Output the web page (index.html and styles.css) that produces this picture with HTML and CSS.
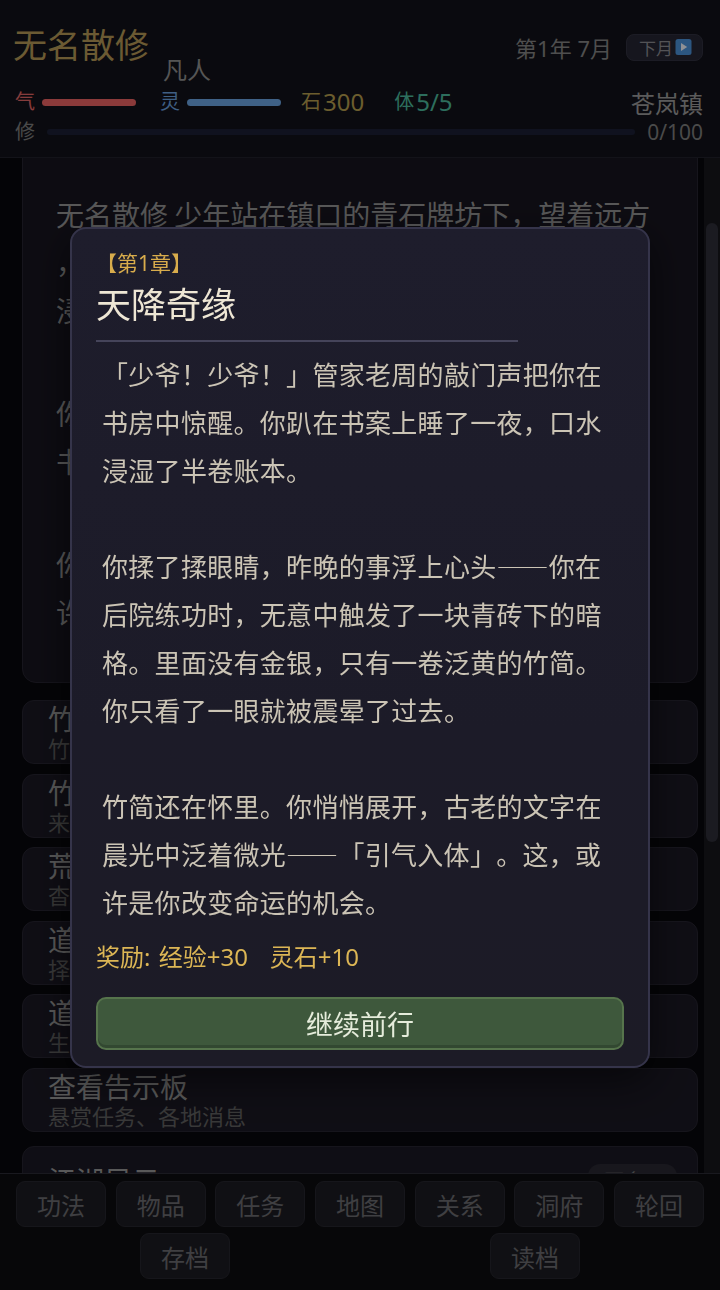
FILE: index.html
```html
<!DOCTYPE html>
<html lang="zh-CN">
<head>
<meta charset="utf-8">
<title>无名散修</title>
<link rel="stylesheet" href="styles.css">
</head>
<body>
<div class="app">
  <header class="status">
    <div class="status-top">
      <div class="ident">
        <div class="name">无名散修</div>
        <div class="realm">凡人</div>
      </div>
      <div class="time">
        <span class="date">第1年 7月</span>
        <button class="next-month">下月<span class="play"><svg viewBox="0 0 16 16" width="17" height="16"><rect width="16" height="16" rx="2.5" fill="#4a8fd6"/><path d="M5.5 4l6.2 4-6.2 4z" fill="#eef2f8"/></svg></span></button>
      </div>
    </div>
    <div class="stats">
      <span class="stat qi"><span class="lbl">气</span><span class="bar"><span class="fill" style="width:100%"></span></span></span>
      <span class="stat ling"><span class="lbl">灵</span><span class="bar"><span class="fill" style="width:100%"></span></span></span>
      <span class="stat stone"><span class="lbl">石</span><span class="num">300</span></span>
      <span class="stat vigor"><span class="lbl">体</span><span class="num">5/5</span></span>
      <span class="location">苍岚镇</span>
    </div>
    <div class="cult">
      <span class="lbl">修</span>
      <span class="track"><span class="fill" style="width:0%"></span></span>
      <span class="cult-num">0/100</span>
    </div>
  </header>

  <div class="viewport">
    <main class="scroll" id="scroll">
      <article class="story">
        <p>【第1年 1月】初入江湖</p>
        <p>无名散修 少年站在镇口的青石牌坊下，望着远方<br>，群山连绵，云雾缭绕，似有仙鹤掠过峰顶。镇<br>浸在晨光里，炊烟袅袅，一切都那么平静。</p>
        <p>你自幼便听说，在那云雾深处，藏着修仙问道之<br>书，得之者可超脱凡俗，长生久视。</p>
        <p>你攥紧拳头，暗暗发誓，总有一天要踏入仙门。<br>许多年后，人们仍会记得这个清晨。</p>
      </article>

      <ul class="menu">
        <li class="item"><div class="item-title">竹林修炼</div><div class="item-sub">竹林清幽，适合打坐吐纳</div></li>
        <li class="item"><div class="item-title">竹简参悟</div><div class="item-sub">来自后院暗格的神秘竹简</div></li>
        <li class="item"><div class="item-title">荒野采药</div><div class="item-sub">杳无人烟，或有灵草生长</div></li>
        <li class="item"><div class="item-title">道观问道</div><div class="item-sub">择一良师，踏上仙途</div></li>
        <li class="item"><div class="item-title">道旁茶肆</div><div class="item-sub">生意人聚集，打听消息</div></li>
        <li class="item"><div class="item-title">查看告示板</div><div class="item-sub">悬赏任务、各地消息</div></li>
      </ul>

      <section class="news">
        <div class="news-head">
          <span class="news-title">江湖风云</span>
          <span class="more">更多 &gt;</span>
        </div>
        <p class="news-line">青云宗将于三月后开山收徒，凡人皆可一试。</p>
        <p class="news-line">苍岚镇外山林中近日有妖兽出没。</p>
        <p class="news-line">城中药铺高价收购百年灵芝。</p>
      </section>
    </main>
    <div class="scrollbar"><span class="thumb" id="thumb"></span></div>
  </div>

  <nav class="actions">
    <div class="row row-main">
      <button class="act">功法</button>
      <button class="act">物品</button>
      <button class="act">任务</button>
      <button class="act">地图</button>
      <button class="act">关系</button>
      <button class="act">洞府</button>
      <button class="act">轮回</button>
    </div>
    <div class="row row-save">
      <button class="act">存档</button>
      <button class="act">读档</button>
    </div>
  </nav>
</div>

<div class="overlay">
  <section class="dialog">
    <div class="chapter">【第1章】</div>
    <h2 class="dialog-title">天降奇缘</h2>
    <div class="rule"></div>
    <div class="dialog-body">「少爷！少爷！」管家老周的敲门声把你在书房中惊醒。你趴在书案上睡了一夜，口水浸湿了半卷账本。

你揉了揉眼睛，昨晚的事浮上心头——你在后院练功时，无意中触发了一块青砖下的暗格。里面没有金银，只有一卷泛黄的竹简。你只看了一眼就被震晕了过去。

竹简还在怀里。你悄悄展开，古老的文字在晨光中泛着微光——「引气入体」。这，或许是你改变命运的机会。</div>
    <div class="reward">奖励: <span class="gain">经验+30</span><span class="gain">灵石+10</span></div>
    <button class="continue">继续前行</button>
  </section>
</div>

<script src="script.js"></script>
</body>
</html>
```

FILE: styles.css
```css
* {
  box-sizing: border-box;
  margin: 0;
  padding: 0;
}

html,
body {
  height: 100%;
}

body {
  background: #08080c;
  font-family: "Noto Sans", "Noto Sans CJK SC", sans-serif;
  color: #999;
  overflow: hidden;
  text-spacing-trim: space-all;
}

button {
  font-family: inherit;
  cursor: pointer;
}

.app {
  height: 1290px;
  display: flex;
  flex-direction: column;
}

/* ---------- status header ---------- */
.status {
  flex: none;
  background: #121219;
  border-bottom: 1px solid #20202a;
  padding: 28px 17px 13px 13px;
}

.status-top {
  display: flex;
  align-items: flex-start;
}

.ident {
  width: 348px;
}

.name {
  font-size: 34px;
  line-height: 34px;
  color: #b29655;
}

.realm {
  font-size: 24px;
  line-height: 16px;
  text-align: center;
  color: #8e8e8e;
}

.time {
  margin-left: auto;
  height: 34px;
  margin-top: 2px;
  display: flex;
  align-items: center;
  gap: 14px;
}

.date {
  font-size: 22px;
  color: #838383;
}

.next-month {
  height: 27px;
  padding: 0 10px 0 12px;
  display: inline-flex;
  align-items: center;
  gap: 2px;
  background: #262633;
  border: 1px solid #30303e;
  border-radius: 8px;
  color: #8a8a90;
  font-size: 17px;
}

.play {
  display: inline-flex;
}

.stats {
  margin-top: 10px;
  height: 28px;
  padding-left: 2px;
  display: flex;
  align-items: center;
}

.stat {
  display: inline-flex;
  align-items: center;
}

.lbl {
  font-size: 20px;
  line-height: 24px;
}

.bar {
  width: 94px;
  height: 7px;
  margin-left: 7px;
  border-radius: 4px;
  overflow: hidden;
  background: #25222e;
}

.bar .fill {
  display: block;
  height: 100%;
}

.stat.qi {
  margin-right: 24px;
  color: #e06464;
}

.stat.qi .fill {
  background: #e86262;
}

.stat.ling {
  margin-right: 20px;
  color: #6a9edb;
}

.stat.ling .fill {
  background: #6aa2e0;
}

.num {
  font-size: 24px;
  line-height: 28px;
  margin-left: 2px;
}

.stat.stone {
  margin-right: 30px;
  color: #b39b4e;
}

.stat.vigor {
  color: #4bb89c;
}

.location {
  margin-left: auto;
  font-size: 24px;
  color: #989898;
}

.cult {
  margin-top: 4px;
  height: 24px;
  padding-left: 2px;
  display: flex;
  align-items: center;
  color: #7c7c7c;
}

.track {
  flex: 1;
  height: 6px;
  margin: 0 12px;
  border-radius: 3px;
  background: #1b1f34;
  overflow: hidden;
}

.track .fill {
  display: block;
  height: 100%;
  background: #7a7ab8;
}

.cult-num {
  font-size: 21px;
  color: #7c7c7c;
}

/* ---------- scrolling content ---------- */
.viewport {
  flex: 1;
  min-height: 0;
  position: relative;
  display: flex;
}

.scroll {
  flex: 1;
  min-width: 0;
  overflow-y: hidden;
  padding: 12px 22px 19px 22px;
}

.scrollbar {
  position: absolute;
  top: 0;
  right: 0;
  bottom: 0;
  width: 16px;
  background: #16161c;
}

.thumb {
  position: absolute;
  left: 2px;
  right: 2px;
  top: 65px;
  height: 619px;
  border-radius: 6px;
  background: #2d2d37;
}

.story {
  background: #17151f;
  border: 1px solid #25232f;
  border-radius: 14px;
  padding: 22px 33px 46px;
  font-family: "Noto Sans CJK SC", sans-serif;
  font-size: 28px;
  line-height: 48px;
  color: #949494;
}

.story p {
  white-space: nowrap;
}

.story p + p {
  margin-top: 55px;
}

.menu {
  list-style: none;
  margin-top: 17px;
  display: flex;
  flex-direction: column;
  gap: 9.6px;
}

.item {
  height: 64px;
  padding: 2px 25px;
  background: #1a1823;
  border: 1px solid #262430;
  border-radius: 12px;
}

.item-title {
  font-size: 28px;
  line-height: 32px;
  color: #959595;
}

.item-sub {
  font-size: 22px;
  line-height: 26px;
  color: #5f5f5f;
}

.news {
  margin-top: 14px;
  min-height: 550px;
  padding: 14px 20px 14px 25px;
  background: #1a1823;
  border: 1px solid #262430;
  border-radius: 12px;
}

.news-head {
  display: flex;
  align-items: center;
  justify-content: space-between;
}

.news-title {
  font-size: 28px;
  line-height: 40px;
  color: #959595;
}

.more {
  padding: 2px 16px;
  border-radius: 12px;
  background: #282731;
  font-size: 20px;
  color: #777;
}

.news-line {
  margin-top: 16px;
  font-size: 22px;
  line-height: 32px;
  color: #6e6e6e;
}

/* ---------- bottom actions ---------- */
.actions {
  flex: none;
  background: #0c0c10;
  border-top: 1px solid #2b2b35;
  padding: 7px 10px 11px;
  display: flex;
  flex-direction: column;
  gap: 6px;
}

.row-main {
  padding: 0 6px;
  display: grid;
  grid-template-columns: repeat(7, 1fr);
  gap: 9.6px;
}

.row-save {
  display: flex;
  justify-content: space-around;
}

.act {
  height: 46px;
  width: 90px;
  background: #1c1c22;
  border: 1px solid #25252d;
  border-radius: 9px;
  color: #6a6a6e;
  font-size: 24px;
}

.row-main .act {
  width: auto;
}

/* ---------- modal ---------- */
.overlay {
  position: fixed;
  inset: 0;
  background: rgba(0, 0, 0, 0.4);
  display: flex;
  align-items: center;
  justify-content: center;
}

.dialog {
  width: 580px;
  margin-top: 5px;
  padding: 21px 24px 16px;
  background: linear-gradient(180deg, #1e1d2c 0%, #1c1b28 60%, #1c1b26 100%);
  border: 2px solid #35344a;
  border-radius: 16px;
  box-shadow: 0 12px 40px rgba(0, 0, 0, 0.55);
}

.chapter {
  font-size: 21px;
  line-height: 26px;
  color: #d8ac4c;
}

.dialog-title {
  margin-top: 9px;
  font-size: 35px;
  line-height: 40px;
  font-weight: 400;
  color: #eee6d4;
}

.rule {
  margin-top: 15px;
  width: 80%;
  height: 2px;
  background: #45445a;
}

.dialog-body {
  margin-top: 8px;
  padding: 0 6px;
  white-space: pre-line;
  font-family: "Noto Sans CJK SC", sans-serif;
  font-size: 26px;
  line-height: 48px;
  letter-spacing: 0.3px;
  color: #cbc4b5;
}

.reward {
  margin-top: 16px;
  font-size: 24px;
  line-height: 30px;
  color: #dcb655;
}

.gain {
  margin-left: 2px;
}

.gain + .gain {
  margin-left: 22px;
}

.continue {
  display: block;
  width: 100%;
  height: 53px;
  margin-top: 25px;
  background: #3e583c;
  border: 2px solid #56744c;
  border-radius: 10px;
  box-shadow: inset 0 -3px 0 rgba(0, 0, 0, 0.18);
  color: #e5ecdb;
  font-size: 27px;
}
```

FILE: script.js
```js
var scroller = document.getElementById('scroll');
var thumb = document.getElementById('thumb');
scroller.scrollTop = 106;
var view = scroller.clientHeight;
var total = scroller.scrollHeight;
thumb.style.height = (view * view / total) + 'px';
thumb.style.top = (scroller.scrollTop * view / total) + 'px';
```
